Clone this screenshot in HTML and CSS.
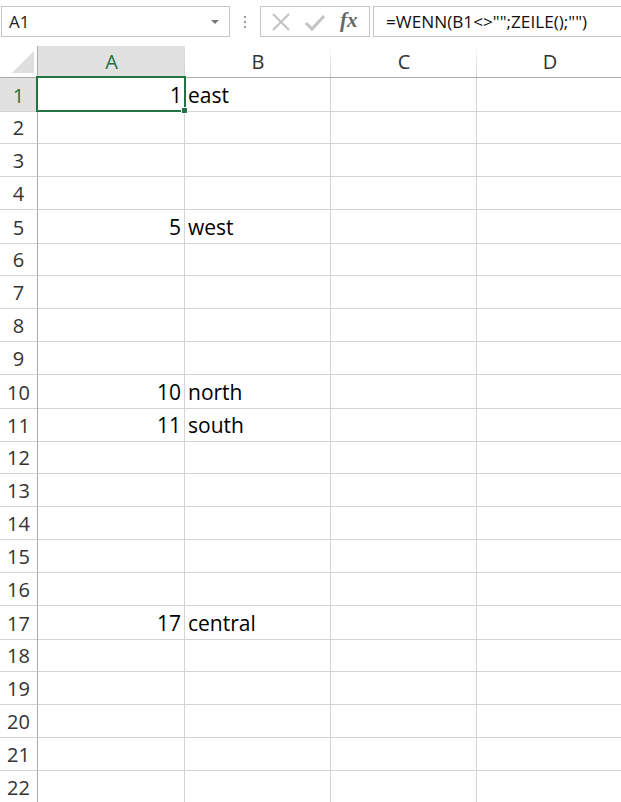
FILE: index.html
```html
<!DOCTYPE html>
<html>
<head>
<meta charset="utf-8">
<link rel="stylesheet" href="styles.css">
</head>
<body>
<div class="formulabar">
  <div class="namebox"><span class="nb-text">A1</span><span class="nb-arrow"></span></div>
  <div class="dots"><i></i><i></i><i></i></div>
  <div class="buttons">
    <svg class="ico" width="22" height="22" viewBox="0 0 22 22"><path d="M3 3 L19 19 M19 3 L3 19" stroke="#c4c4c4" stroke-width="2.2" fill="none"/></svg>
    <svg class="ico" width="24" height="22" viewBox="0 0 24 22"><path d="M3 12 L9 18 L21 5" stroke="#c4c4c4" stroke-width="3" fill="none"/></svg>
    <span class="fx">fx</span>
  </div>
  <div class="formula">=WENN(B1&lt;&gt;"";ZEILE();"")</div>
</div>
<div class="sheet">
  <div class="row head">
    <div class="corner"><span class="tri"></span></div>
    <div class="colh sel">A</div>
    <div class="colh">B</div>
    <div class="colh">C</div>
    <div class="colh">D</div>
  </div>
  <div class="row"><div class="rowh sel">1</div><div class="cell num active">1<span class="handle"></span></div><div class="cell">east</div><div class="cell"></div><div class="cell"></div></div>
  <div class="row"><div class="rowh">2</div><div class="cell"></div><div class="cell"></div><div class="cell"></div><div class="cell"></div></div>
  <div class="row"><div class="rowh">3</div><div class="cell"></div><div class="cell"></div><div class="cell"></div><div class="cell"></div></div>
  <div class="row"><div class="rowh">4</div><div class="cell"></div><div class="cell"></div><div class="cell"></div><div class="cell"></div></div>
  <div class="row"><div class="rowh">5</div><div class="cell num">5</div><div class="cell">west</div><div class="cell"></div><div class="cell"></div></div>
  <div class="row"><div class="rowh">6</div><div class="cell"></div><div class="cell"></div><div class="cell"></div><div class="cell"></div></div>
  <div class="row"><div class="rowh">7</div><div class="cell"></div><div class="cell"></div><div class="cell"></div><div class="cell"></div></div>
  <div class="row"><div class="rowh">8</div><div class="cell"></div><div class="cell"></div><div class="cell"></div><div class="cell"></div></div>
  <div class="row"><div class="rowh">9</div><div class="cell"></div><div class="cell"></div><div class="cell"></div><div class="cell"></div></div>
  <div class="row"><div class="rowh">10</div><div class="cell num">10</div><div class="cell">north</div><div class="cell"></div><div class="cell"></div></div>
  <div class="row"><div class="rowh">11</div><div class="cell num">11</div><div class="cell">south</div><div class="cell"></div><div class="cell"></div></div>
  <div class="row"><div class="rowh">12</div><div class="cell"></div><div class="cell"></div><div class="cell"></div><div class="cell"></div></div>
  <div class="row"><div class="rowh">13</div><div class="cell"></div><div class="cell"></div><div class="cell"></div><div class="cell"></div></div>
  <div class="row"><div class="rowh">14</div><div class="cell"></div><div class="cell"></div><div class="cell"></div><div class="cell"></div></div>
  <div class="row"><div class="rowh">15</div><div class="cell"></div><div class="cell"></div><div class="cell"></div><div class="cell"></div></div>
  <div class="row"><div class="rowh">16</div><div class="cell"></div><div class="cell"></div><div class="cell"></div><div class="cell"></div></div>
  <div class="row"><div class="rowh">17</div><div class="cell num">17</div><div class="cell">central</div><div class="cell"></div><div class="cell"></div></div>
  <div class="row"><div class="rowh">18</div><div class="cell"></div><div class="cell"></div><div class="cell"></div><div class="cell"></div></div>
  <div class="row"><div class="rowh">19</div><div class="cell"></div><div class="cell"></div><div class="cell"></div><div class="cell"></div></div>
  <div class="row"><div class="rowh">20</div><div class="cell"></div><div class="cell"></div><div class="cell"></div><div class="cell"></div></div>
  <div class="row"><div class="rowh">21</div><div class="cell"></div><div class="cell"></div><div class="cell"></div><div class="cell"></div></div>
  <div class="row"><div class="rowh">22</div><div class="cell"></div><div class="cell"></div><div class="cell"></div><div class="cell"></div></div>
</div>
</body>
</html>
```
FILE: styles.css
```css
* { box-sizing: border-box; }
html, body { margin: 0; padding: 0; background: #fff; overflow: hidden; }
body { width: 621px; height: 802px; font-family: "Open Sans", "Noto Sans", sans-serif; color: #000; }

.formulabar {
  height: 46px;
  display: flex;
  align-items: flex-start;
  padding-top: 6px;
}
.namebox {
  margin-left: 1px;
  width: 229px;
  height: 31px;
  border: 1px solid #c6c6c6;
  display: flex;
  align-items: center;
  justify-content: space-between;
  padding: 0 10px 0 7px;
  font-size: 17px;
  color: #222;
}
.nb-arrow {
  width: 0; height: 0;
  border-left: 4px solid transparent;
  border-right: 4px solid transparent;
  border-top: 4px solid #777;
}
.dots {
  width: 30px;
  height: 31px;
  display: flex;
  flex-direction: column;
  align-items: center;
  justify-content: center;
  gap: 3px;
}
.dots i { display: block; width: 2px; height: 2px; background: #9a9a9a; }
.buttons {
  width: 110px;
  height: 31px;
  border: 1px solid #c6c6c6;
  display: flex;
  align-items: center;
  padding-left: 9px;
  gap: 11px;
}
.fx {
  font-family: "Liberation Serif", "DejaVu Serif", serif;
  font-style: italic;
  font-weight: bold;
  font-size: 21px;
  color: #666;
  margin-left: 2px;
  line-height: 1;
  margin-top: -3px;
}
.formula {
  margin-left: 3px;
  flex: 1;
  height: 31px;
  border: 1px solid #c6c6c6;
  border-right: none;
  padding-left: 12px;
  font-size: 17.2px;
  line-height: 29px;
  color: #111;
  white-space: nowrap;
}

.sheet { display: flex; flex-direction: column; }
.row {
  display: grid;
  grid-template-columns: 38px 147px 146px 146px 146px;
  height: 33px;
}
.row.head { height: 32px; }
.corner {
  border-right: 1px solid #ababab;
  border-bottom: 1px solid #ababab;
  background: #fff;
  position: relative;
}
.tri {
  position: absolute;
  right: 3px; bottom: 4px;
  width: 0; height: 0;
  border-left: 22px solid transparent;
  border-bottom: 22px solid #dedede;
}
.colh {
  border-bottom: 1px solid #ababab;
  background: linear-gradient(to bottom, rgba(212,212,212,0), #d0d0d0) right top / 1px 100% no-repeat;
  display: flex;
  align-items: center;
  justify-content: center;
  font-size: 20px;
  color: #333;
}
.colh.sel {
  background-color: #e1e1e1;
  color: #217346;
  border-bottom: 2px solid #217346;
}
.rowh {
  border-right: 1px solid #ababab;
  border-bottom: 1px solid #d4d4d4;
  display: flex;
  align-items: center;
  justify-content: center;
  font-size: 20px;
  color: #333;
  padding-top: 1px;
}
.rowh.sel { background: #e1e1e1; color: #217346; }
.cell {
  border-right: 1px solid #d4d4d4;
  border-bottom: 1px solid #d4d4d4;
  font-size: 21px;
  line-height: 32px;
  padding: 1px 3px 0 3px;
  white-space: nowrap;
  overflow: visible;
  position: relative;
}
.cell.num { text-align: right; }
.cell.active {
  outline: 2px solid #217346;
  outline-offset: -1px;
  margin-left: -1px;
  margin-top: -1px;
  height: 34px;
  z-index: 2;
  padding-top: 2px;
  padding-right: 2px;
}
.handle {
  position: absolute;
  right: -4px; bottom: -4px;
  width: 7px; height: 7px;
  background: #217346;
  border: 1px solid #fff;
}
```
